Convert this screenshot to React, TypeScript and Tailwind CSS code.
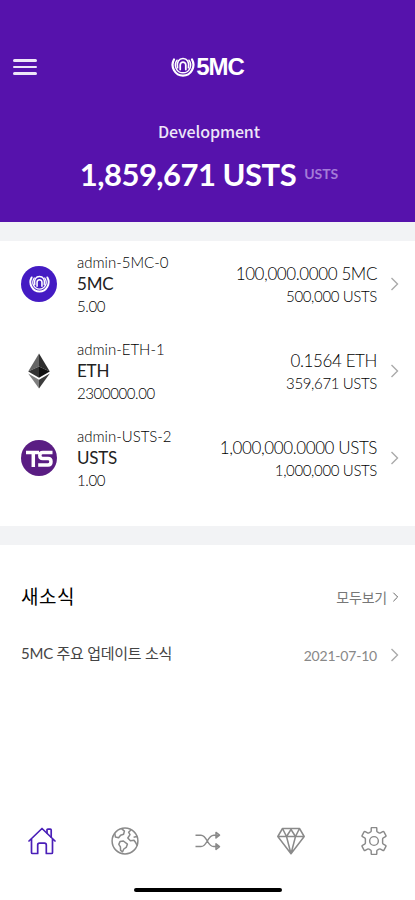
import type { ReactNode } from "react"

const assets = [
  { id: "admin-5MC-0", symbol: "5MC", rate: "5.00", amount: "100,000.0000 5MC", value: "500,000 USTS", icon: <FiveMcCoin /> },
  { id: "admin-ETH-1", symbol: "ETH", rate: "2300000.00", amount: "0.1564 ETH", value: "359,671 USTS", icon: <EthIcon /> },
  { id: "admin-USTS-2", symbol: "USTS", rate: "1.00", amount: "1,000,000.0000 USTS", value: "1,000,000 USTS", icon: <UstsCoin /> },
]

const tabs: { name: string; icon: ReactNode; active?: boolean }[] = [
  { name: "home", icon: <HomeIcon />, active: true },
  { name: "explore", icon: <GlobeIcon /> },
  { name: "swap", icon: <ShuffleIcon /> },
  { name: "rewards", icon: <DiamondIcon /> },
  { name: "settings", icon: <GearIcon /> },
]

function Mark({ className }: { className: string }) {
  return (
    <svg viewBox="0 0 24 20" className={className} fill="none" stroke="currentColor" strokeLinecap="round">
      <path d="M3 2.5C-1 9.5 4 18.6 12 18.6S25 9.5 21 2.5" strokeWidth="2.2" />
      <path d="M6 3.2C2.2 8.5 5.5 15.8 12 15.8S21.8 8.5 18 3.2" strokeWidth="1.5" />
      <path d="M6.6 10.8C5.3 5 8 1.5 12 1.5s6.7 3.5 5.4 9.3" strokeWidth="1.6" />
      <path d="M9.2 12.6V8c0-3.8 5.6-3.8 5.6 0v4.6" strokeWidth="1.8" />
    </svg>
  )
}

function FiveMcCoin() {
  return (
    <div className="flex size-9 items-center justify-center rounded-full bg-[#441bc3] text-white">
      <Mark className="h-[18px] w-[21px]" />
    </div>
  )
}

function EthIcon() {
  return (
    <svg viewBox="0 0 36 36" className="size-9">
      <path d="M18 0.5 7.2 18.4 18 13.5Z" fill="#666" />
      <path d="M18 0.5 28.8 18.4 18 13.5Z" fill="#2e2e2e" />
      <path d="M18 13.5 7.2 18.4 18 24.8Z" fill="#333" />
      <path d="M18 13.5 28.8 18.4 18 24.8Z" fill="#111" />
      <path d="M7.2 20.5 18 26.8V35.5Z" fill="#808080" />
      <path d="M28.8 20.5 18 26.8V35.5Z" fill="#3c3c3b" />
    </svg>
  )
}

function UstsCoin() {
  return (
    <svg viewBox="0 0 36 36" className="size-9">
      <circle cx="18" cy="18" r="18" fill="#5a1d83" />
      <path d="M5 12.6H18M12.3 12.6V27M31.5 12.6H21.8q-3 0-3 3t3 3H27q3 0 3 3.2t-3 3.2h-9.8" fill="none" stroke="#fff" strokeWidth="3.5" />
    </svg>
  )
}

function HomeIcon() {
  return (
    <svg viewBox="0 0 28 28" className="size-7" fill="none" stroke="currentColor" strokeWidth="1.7" strokeLinejoin="round" strokeLinecap="round">
      <path d="M1 14 14 1.5 27 14M3.5 12v13.5q0 1 1 1h5.2V18q0-1.8 1.8-1.8h5q1.8 0 1.8 1.8v8.5h5.2q1 0 1-1V12" />
      <path d="M19 6V3q0-.9.9-.9h2.4q.9 0 .9.9v7" />
    </svg>
  )
}

function GlobeIcon() {
  return (
    <svg viewBox="0 0 28 28" className="size-7" fill="none" stroke="currentColor" strokeWidth="1.5" strokeLinejoin="round">
      <circle cx="14" cy="14" r="12.9" />
      <path d="M3.8 6.4 4.4 10l3.2.8 2-2.6 3-.9.8-3.2L10.6 1.6" />
      <path d="M20.2 2.8l-2.6 2.4 1.4 2.4-2.2 3.4 2.6 2.8 3.6-.6 1.8 2.6 1.6 3.2M26 9.6l-3.4.6" />
      <path d="M9 14.6l3.4-.6 4 3.2-1.2 3.2-2.4 1.6-1.2 2.8-2-1.4-.2-3.6-1.6-2.4z" />
    </svg>
  )
}

function ShuffleIcon() {
  return (
    <svg viewBox="0 0 28 28" className="size-7" fill="none" stroke="currentColor" strokeWidth="1.5" strokeLinejoin="round">
      <path d="M1.5 8.2h5.5c3 0 4.3 2.2 6.3 5.8s3.5 5.6 6.5 5.6H25M1.5 19.6h5.5c3 0 4.3-2 6.3-5.6s3.5-5.8 6.5-5.8H25" />
      <path d="m22 5.4 3.5 2.8-3.5 2.8zM22 16.8l3.5 2.8-3.5 2.8z" />
    </svg>
  )
}

function DiamondIcon() {
  return (
    <svg viewBox="0 0 28 28" className="size-7" fill="none" stroke="currentColor" strokeWidth="1.5" strokeLinejoin="round">
      <path d="M5.5 1.5h17l4.7 8L14 26.8.8 9.5zM.8 9.5h26.4M9.5 9.5 14 26.8l4.5-17.3M5.5 1.5l4 8 4.5-7 4.5 7 4-8" />
    </svg>
  )
}

function GearIcon() {
  return (
    <svg viewBox="0.5 0.5 27 27" className="size-7" fill="none" stroke="currentColor" strokeWidth="1.4" strokeLinejoin="round">
      <path d="M12.2 1h3.6q.9 0 .9.9v2.4q0 .8.8 1.1l1.4.8q.7.4 1.4 0l2.1-1.2q.8-.4 1.2.3l1.8 3.2q.4.8-.3 1.2L23 10.9q-.7.4-.7 1.2v3.8q0 .8.7 1.2l2.1 1.2q.7.4.3 1.2l-1.8 3.2q-.4.7-1.2.3l-2.1-1.2q-.7-.4-1.4 0l-1.4.8q-.8.3-.8 1.1v2.4q0 .9-.9.9h-3.6q-.9 0-.9-.9v-2.4q0-.8-.8-1.1l-1.4-.8q-.7-.4-1.4 0L5.6 23q-.8.4-1.2-.3l-1.8-3.2q-.4-.8.3-1.2L5 17.1q.7-.4.7-1.2v-3.8q0-.8-.7-1.2L2.9 9.7q-.7-.4-.3-1.2l1.8-3.2q.4-.7 1.2-.3l2.1 1.2q.7.4 1.4 0l1.4-.8q.8-.3.8-1.1V1.9q0-.9.9-.9z" />
      <circle cx="14" cy="14" r="4.2" />
    </svg>
  )
}

function Chevron({ className }: { className: string }) {
  return (
    <svg viewBox="0 0 8 14" className={className} fill="none" stroke="currentColor" strokeWidth="1.4">
      <path d="m1 1 6 6-6 6" />
    </svg>
  )
}

export default function App() {
  return (
    <div className="flex h-[900px] w-[415px] flex-col bg-white font-['Lato','Noto_Sans_CJK_KR',sans-serif] text-black">
      <header className="flex h-[222px] flex-col bg-[#5612ac] pt-[54px] text-white">
        <div className="grid h-[26px] grid-cols-3 items-center px-[13px]">
          <button className="flex w-6 flex-col gap-[4px]" aria-label="menu">
            <span className="h-[2.5px] rounded bg-[#eee6f8]" />
            <span className="h-[2.5px] rounded bg-[#eee6f8]" />
            <span className="h-[2.5px] rounded bg-[#eee6f8]" />
          </button>
          <div className="flex items-center justify-center gap-px">
            <Mark className="h-5 w-6" />
            <span className="font-['Liberation_Sans',sans-serif] text-[24px] leading-none font-bold tracking-[-1px]">5MC</span>
          </div>
        </div>
        <p className="mt-[39px] pl-[3px] text-center font-['Noto_Sans_CJK_KR',sans-serif] text-[16px] leading-6 font-medium tracking-[-0.1px] text-[#eee6f8]">Development</p>
        <div className="mt-[11px] flex items-center justify-center gap-2 pl-[3px] leading-10">
          <span className="text-[31px] font-bold tracking-[-0.5px]">1,859,671 USTS</span>
          <span className="text-[14px] font-bold text-[#a47bd8]">USTS</span>
        </div>
      </header>

      <div className="h-[19px] bg-[#f2f3f5]" />

      <ul className="flex h-[285px] flex-col">
        {assets.map((a) => (
          <li key={a.id} className="flex h-[87px] items-center pr-[16px] pb-px pl-[21px]">
            {a.icon}
            <div className="ml-5 flex flex-col pb-px text-[15px] leading-[22px] font-light text-black">
              <span>{a.id}</span>
              <span className="text-[17px] font-normal tracking-[-0.2px] text-[#222]">{a.symbol}</span>
              <span className="tracking-[-0.4px]">{a.rate}</span>
            </div>
            <div className="ml-auto flex flex-col items-end font-light text-black">
              <span className="text-[17px] leading-6 tracking-[-0.4px]">{a.amount}</span>
              <span className="-mt-px text-[15px] leading-[22px] tracking-[-0.35px]">{a.value}</span>
            </div>
            <Chevron className="ml-[13px] h-[14px] w-[9px] text-[#aaa]" />
          </li>
        ))}
      </ul>

      <div className="h-[19px] bg-[#f2f3f5]" />

      <section className="flex flex-1 flex-col pt-[36px] pr-[16px] pl-[21px]">
        <div className="flex h-8 items-center justify-between">
          <h2 className="text-[19px] tracking-[0.5px]">새소식</h2>
          <a className="flex items-center gap-[5px] text-[14px] tracking-[-0.2px] text-[#777]">
            모두보기
            <Chevron className="h-[10px] w-[7px] text-[#666]" />
          </a>
        </div>
        <div className="mt-[24px] flex h-8 items-center">
          <span className="text-[15px] tracking-[-0.25px] text-[#444]">5MC 주요 업데이트 소식</span>
          <span className="mt-[5px] ml-auto text-[14px] tracking-[-0.2px] text-[#888]">2021-07-10</span>
          <Chevron className="mt-[3px] ml-[13px] h-[14px] w-[9px] text-[#aaa]" />
        </div>
      </section>

      <nav className="flex h-[93px] flex-col">
        <div className="grid grid-cols-5 pt-[20px]">
          {tabs.map((t) => (
            <a key={t.name} aria-label={t.name} className={`flex justify-center ${t.active ? "text-[#4a1fb8]" : "text-[#8a8a8a]"}`}>
              {t.icon}
            </a>
          ))}
        </div>
        <div className="mx-auto mt-auto mb-[8px] h-[4px] w-[148px] rounded-full bg-black" />
      </nav>
    </div>
  )
}
